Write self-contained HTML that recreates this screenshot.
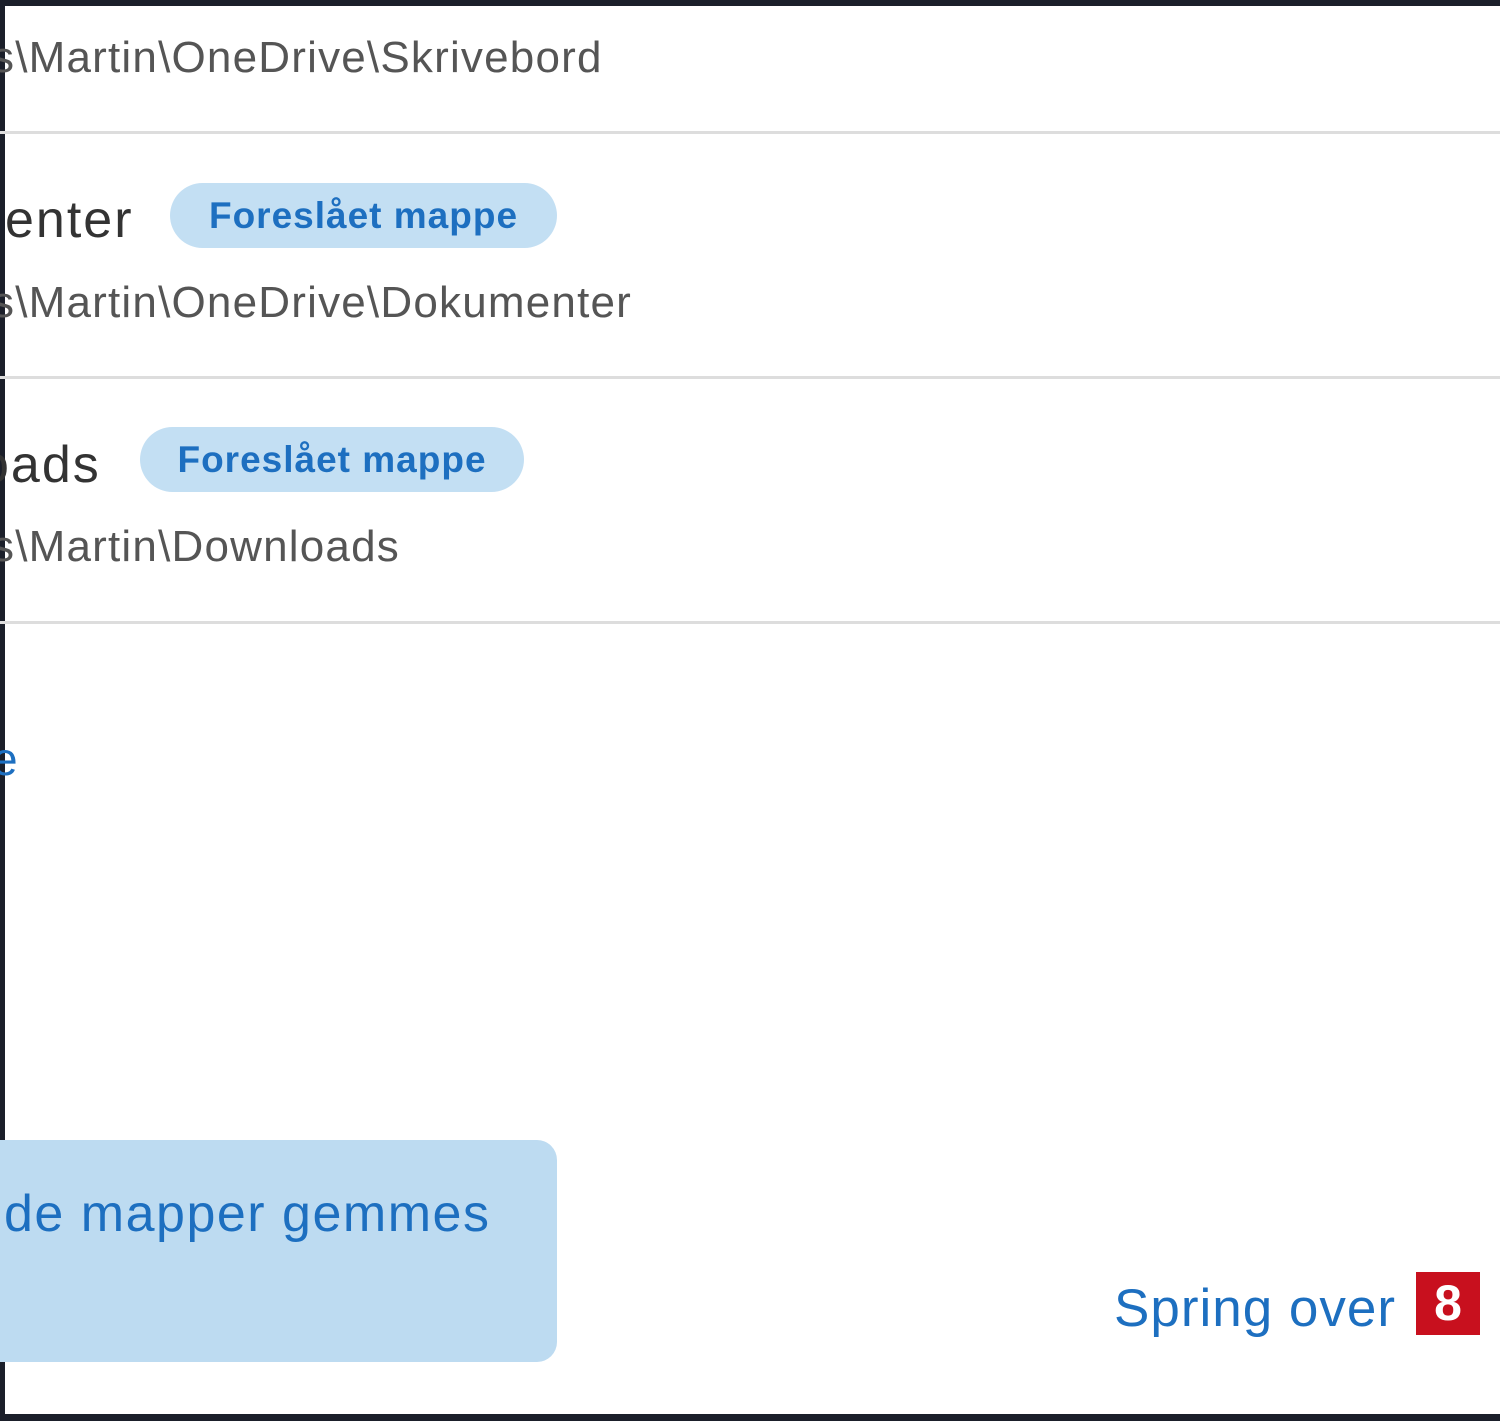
<!DOCTYPE html>
<html><head><meta charset="utf-8"><style>
html,body{margin:0;padding:0}
body{width:1500px;height:1421px;position:relative;overflow:hidden;background:#fff;font-family:"Liberation Sans",sans-serif}
.a{position:absolute;white-space:nowrap}
.path{color:#555;font-size:44px;letter-spacing:1.2px;line-height:1}
.name{color:#333;font-size:52px;letter-spacing:2px;line-height:1}
.hr{position:absolute;left:0;width:1500px;height:3px;background:#ddd}
.chip{position:absolute;background:#c3dff3;border-radius:33px;color:#1d6fc0;font-size:37px;font-weight:bold;letter-spacing:1px;line-height:65px;text-align:center;height:65px}
</style></head><body>
<div class="a" style="left:0;top:0;width:1500px;height:6px;background:#1b1f2a"></div>
<div class="a" style="left:0;top:0;width:5px;height:1421px;background:#1b1f2a"></div>
<div class="a" style="left:0;top:1414px;width:1500px;height:7px;background:#1b1f2a"></div>

<div class="a path" style="left:-8px;top:36px">s\Martin\OneDrive\Skrivebord</div>
<div class="hr" style="top:131px"></div>

<div class="a name" style="left:5px;top:194px">enter</div>
<div class="chip" style="left:170px;top:183px;width:387px">Foreslået mappe</div>
<div class="a path" style="left:-8px;top:281px">s\Martin\OneDrive\Dokumenter</div>
<div class="hr" style="top:376px"></div>

<div class="a name" style="left:-20px;top:439px">oads</div>
<div class="chip" style="left:140px;top:427px;width:384px">Foreslået mappe</div>
<div class="a path" style="left:-8px;top:525px">s\Martin\Downloads</div>
<div class="hr" style="top:621px"></div>

<div class="a" style="left:-8px;top:732px;color:#1d6fc0;font-size:46px">e</div>

<div class="a" style="left:-30px;top:1140px;width:587px;height:222px;background:#bddbf1;border-radius:20px"></div>
<div class="a" style="left:4px;top:1188px;color:#1d6fc0;font-size:52px;letter-spacing:1.5px;line-height:1">de mapper gemmes</div>

<div class="a" style="left:1114px;top:1282px;color:#1d6fc0;font-size:53px;letter-spacing:1px;line-height:1">Spring over</div>
<div class="a" style="left:1416px;top:1272px;width:64px;height:63px;background:#c8101e;color:#fff;font-weight:bold;font-size:50px;line-height:63px;text-align:center">8</div>
</body></html>
